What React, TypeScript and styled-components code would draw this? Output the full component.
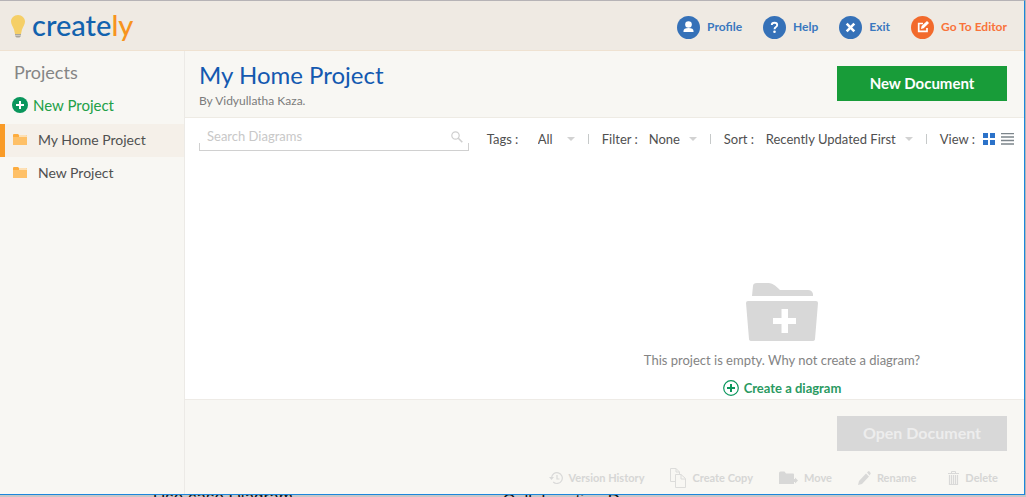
import React from "react";
import styled, { createGlobalStyle } from "styled-components";

const GlobalStyle = createGlobalStyle`
  * { box-sizing: border-box; }
  body { margin: 0; background: #b4b4b6; font-family: Lato, "Liberation Sans", sans-serif; color: #505050; }
  button, input, select { font: inherit; color: inherit; }
  a { text-decoration: none; color: inherit; }
  svg { display: block; flex: none; }
`;

const Page = styled.div`
  display: flex;
  flex-direction: column;
  height: 100vh;
  overflow: hidden;
`;

const AppWindow = styled.div`
  flex: 1;
  min-height: 0;
  margin-right: 1px;
  display: flex;
  flex-direction: column;
  border-top: 1px solid #b6b3b6;
  border-right: 1px solid #1c86dc;
  border-bottom: 1px solid #1c86dc;
  background: #f8f7f3;
`;

const Header = styled.header`
  display: flex;
  align-items: center;
  justify-content: space-between;
  height: 50px;
  padding: 0 17px 0 11px;
  background: #efeae3;
  border-bottom: 1px solid #efe2d1;
`;

const Logo = styled.a`
  display: flex;
  align-items: center;
  gap: 7px;
  font-size: 29px;
  font-weight: 500;
  line-height: 40px;
  color: #1262ae;
`;

const LogoText = styled.span`
  padding-bottom: 2px;
`;

const LogoAccent = styled.span`
  color: #f7941e;
`;

const HeaderNav = styled.nav`
  display: flex;
  gap: 21px;
  padding-top: 4px;
`;

const HeaderLink = styled.a<{ $accent?: boolean }>`
  display: flex;
  align-items: center;
  gap: 7px;
  font-size: 12px;
  font-weight: 700;
  line-height: 16px;
  color: ${(p) => (p.$accent ? "#f9733a" : "#3a78bf")};
`;

const HeaderText = styled.span`
  padding-bottom: 2px;
`;

const Body = styled.div`
  flex: 1;
  min-height: 0;
  display: flex;
`;

const Sidebar = styled.aside`
  width: 185px;
  flex: none;
  border-right: 1px solid #eceae6;
`;

const SidebarTitle = styled.h2`
  margin: 0;
  padding: 9px 14px 0;
  font-size: 18px;
  font-weight: 400;
  line-height: 24px;
  color: #858585;
`;

const NewProjectButton = styled.button`
  display: flex;
  align-items: center;
  gap: 5px;
  margin: 10px 0 8px;
  padding: 0 12px;
  border: 0;
  background: none;
  font-size: 15px;
  line-height: 22px;
  color: #21a047;
`;

const ProjectList = styled.ul`
  margin: 0;
  padding: 0;
  list-style: none;
`;

const ProjectLink = styled.a<{ $active?: boolean }>`
  display: flex;
  align-items: center;
  gap: 11px;
  height: 33px;
  padding: 0 0 2px 8px;
  border-left: 5px solid ${(p) => (p.$active ? "#f99b27" : "transparent")};
  background: ${(p) => (p.$active ? "#f5f0e9" : "transparent")};
  font-size: 14px;
  line-height: 20px;
`;

const Main = styled.main`
  flex: 1;
  min-width: 0;
  display: flex;
  flex-direction: column;
`;

const TitleBar = styled.div`
  display: flex;
  justify-content: space-between;
  align-items: flex-start;
  height: 67px;
  padding: 9px 17px 0 14px;
  border-bottom: 1px solid #eeebe4;
`;

const Title = styled.h1`
  margin: 0;
  font-size: 24px;
  font-weight: 400;
  line-height: 30px;
  color: #1459b0;
`;

const Owner = styled.p`
  margin: 3px 0 0;
  font-size: 12px;
  line-height: 16px;
  color: #7b7b7b;
`;

const BigButton = styled.button<{ $muted?: boolean }>`
  width: 170px;
  height: 35px;
  padding: 0 0 2px;
  border: 0;
  background: ${(p) => (p.$muted ? "#d8d8d8" : "#189c39")};
  color: ${(p) => (p.$muted ? "#ededed" : "#ffffff")};
  font-size: ${(p) => (p.$muted ? "16px" : "15px")};
  font-weight: 700;
`;

const NewDocument = styled(BigButton)`
  margin-top: 6px;
`;

const Toolbar = styled.div`
  display: flex;
  align-items: center;
  justify-content: space-between;
  height: 41px;
  padding: 0 10px 0 14px;
  background: #fff;
`;

const SearchBox = styled.label`
  position: relative;
  display: flex;
  align-items: center;
  width: 270px;
  height: 28px;
  padding: 0 6px 0 8px;
  margin-bottom: 3px;

  &::after {
    content: "";
    position: absolute;
    left: 0;
    right: 0;
    bottom: 0;
    height: 7px;
    border: 1px solid #d0d0d0;
    border-top: 0;
    pointer-events: none;
  }
`;

const SearchInput = styled.input`
  flex: 1;
  min-width: 0;
  padding: 0 0 2px;
  border: 0;
  outline: 0;
  background: none;
  font-size: 13px;
  line-height: 20px;

  &::placeholder { color: #c8c8c8; opacity: 1; }
`;

const Filters = styled.div`
  display: flex;
  align-items: center;
  font-size: 13px;
  line-height: 18px;
`;

const FilterItem = styled.label`
  display: flex;
  align-items: center;
  gap: 12px;
  white-space: pre;
`;

const FilterName = styled.span<{ $width: number }>`
  width: ${(p) => p.$width}px;
`;

const SelectWrap = styled.span`
  display: flex;
  align-items: center;
`;

const Select = styled.select<{ $width: number }>`
  appearance: none;
  width: ${(p) => p.$width}px;
  padding: 0;
  border: 0;
  outline: 0;
  background: none;
`;

const Divider = styled.span`
  width: 1px;
  height: 10px;
  margin: 0 13px;
  background: #c6c9c9;
`;

const ViewLabel = styled.span`
  margin-right: 8px;
`;

const ViewButton = styled.button`
  padding: 0;
  border: 0;
  background: none;
  & + & { margin-left: 6px; }
`;

const EmptyState = styled.section`
  flex: 1;
  min-height: 0;
  display: flex;
  flex-direction: column;
  align-items: center;
  justify-content: flex-end;
  padding-left: 355px;
  background: #fff;
`;

const EmptyText = styled.p`
  margin: 9px 0;
  font-size: 13px;
  line-height: 20px;
  color: #848484;
`;

const CreateButton = styled.button`
  display: flex;
  align-items: center;
  gap: 5px;
  margin-bottom: 2px;
  padding: 0;
  border: 0;
  background: none;
  font-size: 13px;
  font-weight: 700;
  line-height: 18px;
  color: #2a9a61;
`;

const Footer = styled.footer`
  display: flex;
  flex-direction: column;
  align-items: flex-end;
  height: 95px;
  padding: 16px 17px 0 0;
  border-top: 1px solid #eeebe6;
`;

const Actions = styled.div`
  display: flex;
  align-items: center;
  gap: 26px;
  height: 20px;
  margin: 17px 9px 0 0;
`;

const Action = styled.button`
  display: flex;
  align-items: center;
  gap: 6px;
  padding: 0;
  border: 0;
  background: none;
  font-size: 11px;
  font-weight: 700;
  line-height: 16px;
  color: #d6d6d5;
`;

const Backdrop = styled.div`
  display: flex;
  gap: 210px;
  height: 2px;
  padding-left: 153px;
  overflow: hidden;
  background: #c9c7c7;
  font-family: "Liberation Sans", sans-serif;
  font-size: 17px;
  color: #111;
`;

const BackdropText = styled.span<{ $line: number }>`
  line-height: ${(p) => p.$line}px;
`;

const Disc = ({ fill, children }: { fill: string; children: React.ReactNode }) => (
  <svg width="23" height="23" viewBox="0 0 23 23">
    <circle cx="11.5" cy="11.5" r="11.5" fill={fill} />
    {children}
  </svg>
);

const Bulb = () => (
  <svg width="14" height="24" viewBox="0 0 14 24">
    <path d="M7 1C3 1 0 4 0 7.500c0 3 2 5 3 8L4 20h6l1-4.500c1-3 3-5 3-8C14 4 11 1 7 1z" fill="#f5cf67" />
    <path d="M4 20h6v2L8.500 23.500h-3L4 22z" fill="#aaa69d" />
    <path d="M4 21.500h6" stroke="#ddd8cd" strokeWidth=".7" />
  </svg>
);

const SmallFolder = () => (
  <svg width="14" height="12" viewBox="0 0 14 12">
    <path d="M0 1q0-1 1-1h4l1 1h7q1 0 1 1v2H0z" fill="#fdac3e" />
    <path d="M6 1h7q1 0 1 1v1H6z" fill="#fde0b5" />
    <path d="M0 3h14v8H0z" fill="#fec067" />
  </svg>
);

const Caret = () => (
  <svg width="8" height="4" viewBox="0 0 8 4">
    <path d="M0 0h8L4 4z" fill="#d2d2d2" />
  </svg>
);

const filters = [
  { label: "Tags :", labelWidth: 39, width: 29, options: ["All"] },
  { label: "Filter :", labelWidth: 35, width: 40, options: ["None"] },
  { label: "Sort :", labelWidth: 30, width: 139, options: ["Recently Updated First"] },
];

const actions = [
  {
    name: "Version History",
    icon: (
      <svg width="14" height="14" viewBox="0 0 14 14" fill="none" stroke="#d9d9d8">
        <path d="M2.500 7a5.400 5.400 0 1 1 1.700 4M8 4v4h2.500" strokeWidth="1.200" />
        <path d="M0 6h5L2.500 9z" fill="#d9d9d8" stroke="none" />
      </svg>
    ),
  },
  {
    name: "Create Copy",
    icon: (
      <svg width="16" height="20" viewBox="0 0 16 20" fill="none" stroke="#dcdcda">
        <path d="M5.500 13.500H.5V.5H6L9.500 4v2M6 .5V4h3.500M5.500 6.500H11l4.500 4v9h-10zM11 6.500V11h4" />
      </svg>
    ),
  },
  {
    name: "Move",
    icon: (
      <svg width="19" height="14" viewBox="0 0 19 14" fill="#d8d8d7">
        <path d="M0 2q0-1.500 1.500-1.500h4L7 2.500h7q1 0 1 1V8h1V6.500l3 3-3 3V11h-1v2H0z" />
      </svg>
    ),
  },
  {
    name: "Rename",
    icon: (
      <svg width="13" height="14" viewBox="0 0 13 14" fill="#d9d9d8">
        <path d="M0 14l1-4 7-7.500 3 3L4 13zM9 1.500L10.500 0q1 0 2.300 2.200L11.700 4.500z" />
      </svg>
    ),
  },
  {
    name: "Delete",
    icon: (
      <svg width="17" height="14" viewBox="0 0 17 14" fill="none" stroke="#d9d9d8">
        <path d="M6 2.500h11M9.500 2V.5h4V2" />
        <path d="M7.500 4v9.500h8V4M9.500 4v9M11.500 4v9M13.500 4v9" strokeWidth="1.200" />
      </svg>
    ),
  },
];

export default function App() {
  return (
    <Page>
      <GlobalStyle />
      <AppWindow>
        <Header>
          <Logo href="#">
            <Bulb />
            <LogoText>
              create<LogoAccent>ly</LogoAccent>
            </LogoText>
          </Logo>
          <HeaderNav>
            <HeaderLink href="#">
              <Disc fill="#3571b8">
                <circle cx="11.500" cy="8.500" r="3.300" fill="#fff" />
                <path d="M6.500 16v-1q0-3 5-3t5 3v1z" fill="#fff" />
              </Disc>
              <HeaderText>Profile</HeaderText>
            </HeaderLink>
            <HeaderLink href="#">
              <Disc fill="#3571b8">
                <path d="M8.800 9q0-2.300 2.700-2.300T14.200 9q0 1.200-1.300 2t-1.400 2.200" fill="none" stroke="#fff" strokeWidth="1.900" />
                <circle cx="11.500" cy="15.800" r="1.300" fill="#fff" />
              </Disc>
              <HeaderText>Help</HeaderText>
            </HeaderLink>
            <HeaderLink href="#">
              <Disc fill="#3571b8">
                <path d="M7.700 7.700l7.600 7.600M15.300 7.700l-7.600 7.600" stroke="#fff" strokeWidth="2.600" />
              </Disc>
              <HeaderText>Exit</HeaderText>
            </HeaderLink>
            <HeaderLink href="#" $accent>
              <Disc fill="#f26a2c">
                <path d="M12 7.500H7.700v7.800h8.300V12" fill="none" stroke="#fff" strokeWidth="1.700" />
                <path d="M10 13l.6-3L16 5l2 2-5.300 5.300z" fill="#fff" />
              </Disc>
              <HeaderText>Go To Editor</HeaderText>
            </HeaderLink>
          </HeaderNav>
        </Header>

        <Body>
          <Sidebar>
            <SidebarTitle>Projects</SidebarTitle>
            <NewProjectButton>
              <svg width="16" height="16" viewBox="0 0 16 16">
                <circle cx="8" cy="8" r="8" fill="#0a965c" />
                <path d="M8 4v8M4 8h8" stroke="#fff" strokeWidth="2" />
              </svg>
              New Project
            </NewProjectButton>
            <ProjectList>
              <li>
                <ProjectLink href="#" $active>
                  <SmallFolder />
                  My Home Project
                </ProjectLink>
              </li>
              <li>
                <ProjectLink href="#">
                  <SmallFolder />
                  New Project
                </ProjectLink>
              </li>
            </ProjectList>
          </Sidebar>

          <Main>
            <TitleBar>
              <div>
                <Title>My Home Project</Title>
                <Owner>By Vidyullatha Kaza.</Owner>
              </div>
              <NewDocument>New Document</NewDocument>
            </TitleBar>

            <Toolbar>
              <SearchBox>
                <SearchInput placeholder="Search Diagrams" aria-label="Search Diagrams" />
                <svg width="12" height="12" viewBox="0 0 12 12" fill="none" stroke="#cfcfcf">
                  <circle cx="4.500" cy="4.500" r="3.700" strokeWidth="1.200" />
                  <path d="M7.300 7.300l4 4" strokeWidth="1.600" />
                </svg>
              </SearchBox>
              <Filters>
                {filters.map((f) => (
                  <React.Fragment key={f.label}>
                    <FilterItem>
                      <FilterName $width={f.labelWidth}>{f.label}</FilterName>
                      <SelectWrap>
                        <Select $width={f.width}>
                          {f.options.map((o) => (
                            <option key={o}>{o}</option>
                          ))}
                        </Select>
                        <Caret />
                      </SelectWrap>
                    </FilterItem>
                    <Divider />
                  </React.Fragment>
                ))}
                <ViewLabel>View :</ViewLabel>
                <ViewButton aria-label="Grid view">
                  <svg width="12" height="12" viewBox="0 0 12 12" fill="#2b72c9">
                    <path d="M0 0h5v5H0zM7 0h5v5H7zM0 7h5v5H0zM7 7h5v5H7z" />
                  </svg>
                </ViewButton>
                <ViewButton aria-label="List view">
                  <svg width="13" height="12" viewBox="0 0 13 12" stroke="#7c858b">
                    <path d="M0 .5h13M0 4h13M0 7.500h13M0 11h13" strokeWidth="1.500" />
                  </svg>
                </ViewButton>
              </Filters>
            </Toolbar>

            <EmptyState>
              <svg width="72" height="58" viewBox="0 0 72 58" fill="#d8d8d8">
                <path d="M6 13L7 3q0-3 4-3h12q3 0 6 2.500T34 7h28q4 0 5 4v2z" />
                <path
                  fillRule="evenodd"
                  d="M2 18h68q2 0 2 2l-3 36q0 2-3 2H6q-3 0-3-2L0 20q0-2 2-2zM35.500 26v9H27v6h8.500v9h6.500v-9h8v-6h-8v-9z"
                />
              </svg>
              <EmptyText>This project is empty. Why not create a diagram?</EmptyText>
              <CreateButton>
                <svg width="16" height="16" viewBox="0 0 16 16" fill="none" stroke="#0a965c">
                  <circle cx="8" cy="8" r="7.300" strokeWidth="1.200" />
                  <path d="M8 4v8M4 8h8" strokeWidth="2" />
                </svg>
                Create a diagram
              </CreateButton>
            </EmptyState>

            <Footer>
              <BigButton $muted>Open Document</BigButton>
              <Actions>
                {actions.map((a) => (
                  <Action key={a.name}>
                    {a.icon}
                    {a.name}
                  </Action>
                ))}
              </Actions>
            </Footer>
          </Main>
        </Body>
      </AppWindow>
      <Backdrop>
        <BackdropText $line={5}>Use case Diagram</BackdropText>
        <BackdropText $line={11}>Collaboration D</BackdropText>
      </Backdrop>
    </Page>
  );
}
